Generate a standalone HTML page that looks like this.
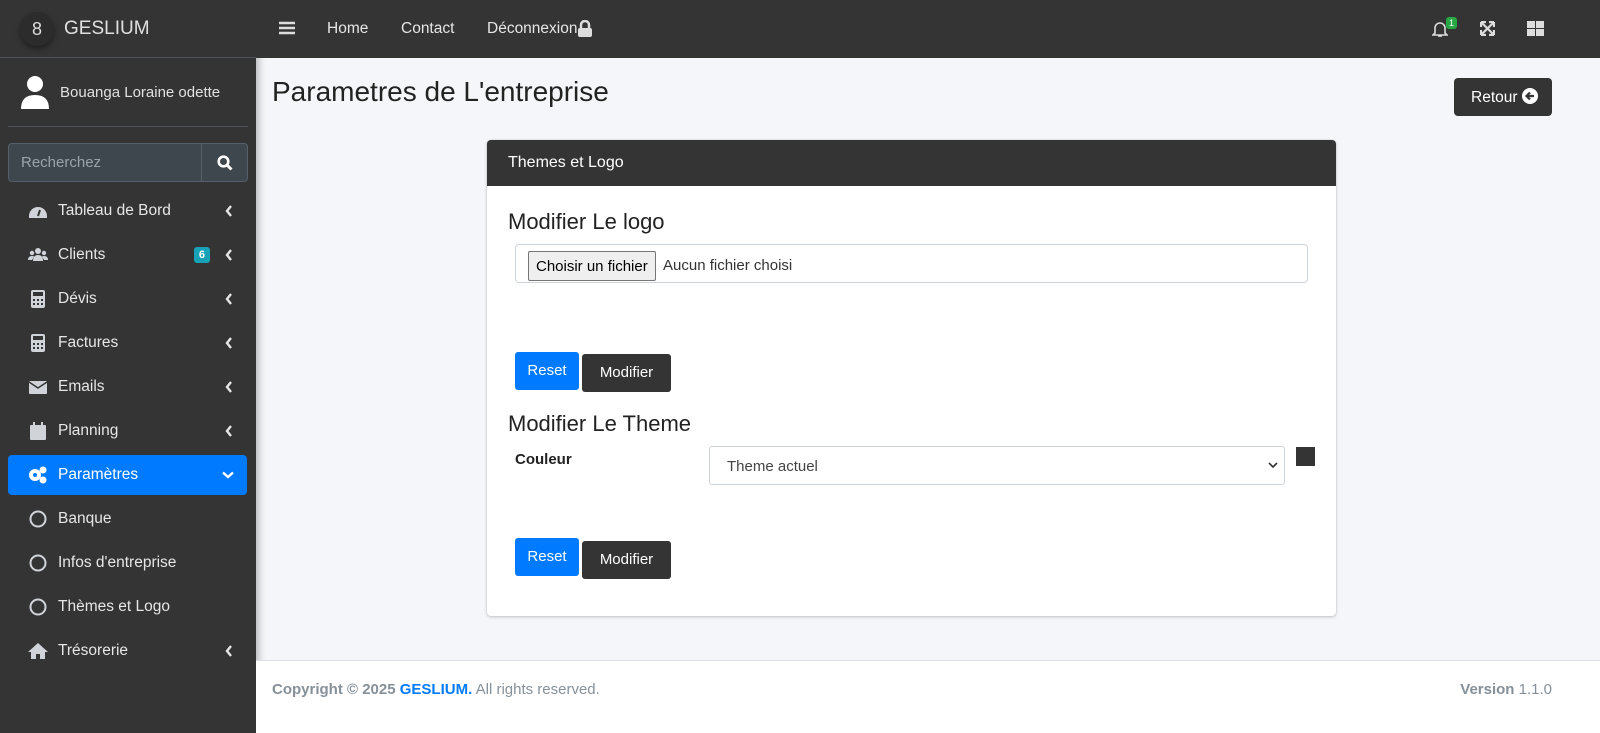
<!DOCTYPE html>
<html><head><meta charset="utf-8"><style>
*{box-sizing:border-box;margin:0;padding:0}
body{width:1600px;height:733px;overflow:hidden;font-family:"Liberation Sans",sans-serif;background:#f4f6f9;position:relative;font-size:15px}
.side{position:absolute;left:0;top:0;width:256px;height:733px;background:#343434;color:#c2c7d0;box-shadow:2px 0 8px rgba(0,0,0,.3)}
.brand{height:58px;border-bottom:1px solid #4b545c;display:flex;align-items:center;padding-left:20px}
.logo{width:34px;height:34px;border-radius:50%;background:#2c2c2c;box-shadow:0 3px 6px rgba(0,0,0,.4);color:#ddd;text-align:center;line-height:34px;font-size:18px}
.brand span{color:#e0e0e0;font-size:19px;margin-left:10px}
.user{height:69px;display:flex;align-items:center;border-bottom:1px solid #4b545c;margin:0 8px;padding-left:12px}
.user span{margin-left:10px;color:#e0e0e0;font-size:15px}
.search{margin:16px 8px 0 8px;height:39px;display:flex;border:1px solid #56606a;border-radius:4px;background:#3f474e}
.search div:first-child{flex:1;padding:10px 12px;color:#9aa3ab;font-size:15px}
.search div:last-child{width:46px;border-left:1px solid #56606a;display:flex;align-items:center;justify-content:center}
.item{position:absolute;left:8px;width:239px;height:40px;display:flex;align-items:center;padding-left:20px;color:#e6e6e6;font-size:15.5px}
.item svg{width:20px;height:20px;margin-right:10px}
.item svg.ch{position:absolute;right:14px;top:14px;width:8px;height:12px;margin:0}
.act{background:#007bff;color:#fff;border-radius:4px}
.top{position:absolute;left:256px;top:0;right:0;height:58px;background:#343434;color:#e6e6e6;font-size:15.5px}
.top span{position:absolute;top:20px}
h1{position:absolute;left:272px;top:76px;font-weight:normal;font-size:28px;color:#222}
.ret{position:absolute;left:1454px;top:78px;width:98px;height:38px;background:#343434;border-radius:4px;color:#fff;font-size:15.5px;padding:10px 0 0 17px}
.card{position:absolute;left:487px;top:140px;width:849px;height:476px;background:#fff;border-radius:4px;box-shadow:0 0 1px rgba(0,0,0,.2),0 1px 3px rgba(0,0,0,.2)}
.ch1{height:46px;background:#343434;color:#fff;border-radius:4px 4px 0 0;padding:14px 21px;font-size:16px}
.h4{position:absolute;font-size:22px;color:#222;left:21px}
.btn{position:absolute;height:38px;border-radius:3px;color:#fff;font-size:15px;text-align:center;line-height:38px}
.foot{position:absolute;left:256px;top:660px;right:0;height:73px;background:#fff;border-top:1px solid #dee2e6;color:#869099;font-size:15px;padding:20px 16px}
</style></head><body>
<div class="side">
 <div class="brand"><div class="logo">8</div><span>GESLIUM</span></div>
 <div class="user"><svg width="30" height="34" viewBox="0 0 30 34"><circle cx="15" cy="9" r="8" fill="#fff"/><path d="M1 34 Q1 20 15 20 Q29 20 29 34Z" fill="#fff"/></svg><span>Bouanga Loraine odette</span></div>
 <div class="search"><div>Recherchez</div><div><svg width="16" height="16" viewBox="0 0 16 16"><circle cx="6.5" cy="6.5" r="4.8" stroke="#fff" stroke-width="2.6" fill="none"/><path d="M10 10l4.5 4.5" stroke="#fff" stroke-width="3"/></svg></div></div>
</div>
<div class="item" style="top:191px"><svg viewBox="0 0 20 20"><path d="M1 15a9 9 0 0118 0v2H1z" fill="#d0d4d9"/><path d="M10 15l2-6" stroke="#343434" stroke-width="2"/></svg>Tableau de Bord<svg class="ch" viewBox="0 0 8 12"><path d="M6 1L2 6l4 5" stroke="#e6e6e6" stroke-width="2.4" fill="none"/></svg></div>
<div class="item" style="top:235px"><svg viewBox="0 0 20 20" fill="#d0d4d9"><circle cx="10" cy="6" r="3"/><circle cx="4" cy="8" r="2.2"/><circle cx="16" cy="8" r="2.2"/><path d="M5 16q0-6 5-6t5 6zM0 15q0-4 4-4 1.5 0 2 .5L4 15zM20 15q0-4-4-4-1.5 0-2 .5l2 3.5z"/></svg>Clients<span style="position:absolute;right:37px;top:12px;background:#17a2b8;color:#fff;font-size:11px;font-weight:bold;padding:2px 5px;border-radius:3px">6</span><svg class="ch" viewBox="0 0 8 12"><path d="M6 1L2 6l4 5" stroke="#e6e6e6" stroke-width="2.4" fill="none"/></svg></div>
<div class="item" style="top:279px"><svg viewBox="0 0 20 20"><rect x="3" y="1" width="14" height="18" rx="2" fill="#d0d4d9"/><rect x="5" y="3" width="10" height="4" fill="#343434"/><path d="M5 10h2v2H5zm4 0h2v2H9zm4 0h2v2h-2zM5 14h2v2H5zm4 0h2v2H9zm4 0h2v2h-2z" fill="#343434"/></svg>Dévis<svg class="ch" viewBox="0 0 8 12"><path d="M6 1L2 6l4 5" stroke="#e6e6e6" stroke-width="2.4" fill="none"/></svg></div>
<div class="item" style="top:323px"><svg viewBox="0 0 20 20"><rect x="3" y="1" width="14" height="18" rx="2" fill="#d0d4d9"/><rect x="5" y="3" width="10" height="4" fill="#343434"/><path d="M5 10h2v2H5zm4 0h2v2H9zm4 0h2v2h-2zM5 14h2v2H5zm4 0h2v2H9zm4 0h2v2h-2z" fill="#343434"/></svg>Factures<svg class="ch" viewBox="0 0 8 12"><path d="M6 1L2 6l4 5" stroke="#e6e6e6" stroke-width="2.4" fill="none"/></svg></div>
<div class="item" style="top:367px"><svg viewBox="0 0 20 20"><rect x="1" y="4" width="18" height="13" rx="1" fill="#d0d4d9"/><path d="M1 5l9 6 9-6" stroke="#343434" stroke-width="1.5" fill="none"/></svg>Emails<svg class="ch" viewBox="0 0 8 12"><path d="M6 1L2 6l4 5" stroke="#e6e6e6" stroke-width="2.4" fill="none"/></svg></div>
<div class="item" style="top:411px"><svg viewBox="0 0 20 20" fill="#d0d4d9"><rect x="2" y="4" width="16" height="15" rx="1"/><rect x="5" y="1" width="2" height="4"/><rect x="13" y="1" width="2" height="4"/></svg>Planning<svg class="ch" viewBox="0 0 8 12"><path d="M6 1L2 6l4 5" stroke="#e6e6e6" stroke-width="2.4" fill="none"/></svg></div>
<div class="item act" style="top:455px"><svg viewBox="0 0 20 20" fill="#fff"><circle cx="7" cy="10" r="6"/><circle cx="15" cy="5" r="3.5"/><circle cx="15" cy="15" r="3.5"/><circle cx="7" cy="10" r="2" fill="#007bff"/></svg>Paramètres<svg style="position:absolute;right:13px;top:16px;width:12px;height:8px;margin:0" viewBox="0 0 12 8"><path d="M1 1.5l5 4.5 5-4.5" stroke="#fff" stroke-width="2.4" fill="none"/></svg></div>
<div class="item" style="top:499px"><svg viewBox="0 0 20 20"><circle cx="10" cy="10" r="7.5" stroke="#d0d4d9" stroke-width="2" fill="none"/></svg>Banque</div>
<div class="item" style="top:543px"><svg viewBox="0 0 20 20"><circle cx="10" cy="10" r="7.5" stroke="#d0d4d9" stroke-width="2" fill="none"/></svg>Infos d'entreprise</div>
<div class="item" style="top:587px"><svg viewBox="0 0 20 20"><circle cx="10" cy="10" r="7.5" stroke="#d0d4d9" stroke-width="2" fill="none"/></svg>Thèmes et Logo</div>
<div class="item" style="top:631px"><svg viewBox="0 0 20 20" fill="#d0d4d9"><path d="M10 2L0 11h3v7h5v-5h4v5h5v-7h3z"/></svg>Trésorerie<svg class="ch" viewBox="0 0 8 12"><path d="M6 1L2 6l4 5" stroke="#e6e6e6" stroke-width="2.4" fill="none"/></svg></div>

<div class="top">
 <svg style="position:absolute;left:23px;top:21px" width="16" height="14"><path d="M0 2h16M0 7h16M0 12h16" stroke="#ddd" stroke-width="2.5"/></svg>
 <span style="left:71px">Home</span><span style="left:145px">Contact</span><span style="left:231px">Déconnexion</span>
 <svg style="position:absolute;left:321px;top:20px" width="16" height="17"><path d="M4 8V5a4 4 0 018 0v3" stroke="#ddd" stroke-width="2.5" fill="none"/><rect x="1" y="8" width="14" height="9" rx="2" fill="#ddd"/></svg>
 <svg style="position:absolute;left:1176px;top:20px" width="16" height="18"><path d="M3 13V8a5 5 0 0110 0v5l2 2H1z" stroke="#ddd" stroke-width="1.6" fill="none"/><path d="M6 16h4" stroke="#ddd" stroke-width="1.6"/></svg>
 <div style="position:absolute;left:1190px;top:17px;background:#28a745;color:#fff;font-size:9px;padding:1px 3px;border-radius:3px">1</div>
 <svg style="position:absolute;left:1224px;top:21px" width="15" height="15"><path d="M1 1l13 13M14 1L1 14M1 1h5M1 1v5M14 1h-5M14 1v5M1 14h5M1 14v-5M14 14h-5M14 14v-5" stroke="#ddd" stroke-width="2.2"/></svg>
 <svg style="position:absolute;left:1271px;top:21px" width="17" height="15" fill="#ddd"><rect x="0" y="0" width="8" height="7"/><rect x="9" y="0" width="8" height="7"/><rect x="0" y="8" width="8" height="7"/><rect x="9" y="8" width="8" height="7"/></svg>
</div>

<h1>Parametres de L'entreprise</h1>
<div class="ret">Retour <svg width="16" height="16" style="vertical-align:-2px"><circle cx="8" cy="8" r="8" fill="#fff"/><path d="M12 8H5M8 4.5L4.5 8 8 11.5" stroke="#343434" stroke-width="2.2" fill="none"/></svg></div>

<div class="card">
 <div class="ch1">Themes et Logo</div>
 <div class="h4" style="top:69px">Modifier Le logo</div>
 <div style="position:absolute;left:28px;top:104px;width:793px;height:39px;border:1px solid #ced4da;border-radius:4px;font-size:15px;color:#333">
  <div style="position:absolute;left:12px;top:6px;height:30px;border:1px solid #767676;background:#efefef;border-radius:2px;padding:6px 7px;font-size:15px;color:#000">Choisir un fichier</div>
  <span style="position:absolute;left:147px;top:12px">Aucun fichier choisi</span></div>
 <div class="btn" style="left:28px;top:212px;width:64px;background:#007bff">Reset</div>
 <div class="btn" style="left:95px;top:214px;width:89px;background:#343434">Modifier</div>
 <div class="h4" style="top:271px">Modifier Le Theme</div>
 <b style="position:absolute;left:28px;top:311px;font-size:15px;color:#222">Couleur</b>
 <div style="position:absolute;left:222px;top:306px;width:576px;height:39px;border:1px solid #ced4da;border-radius:3px;padding:11px 17px;color:#444;font-size:15px">Theme actuel<svg style="position:absolute;right:6px;top:15px" width="10" height="7" viewBox="0 0 10 7"><path d="M1 1l4 4 4-4" stroke="#333" stroke-width="1.6" fill="none"/></svg></div>
 <div style="position:absolute;left:809px;top:307px;width:19px;height:19px;background:#343434"></div>
 <div class="btn" style="left:28px;top:398px;width:64px;background:#007bff">Reset</div>
 <div class="btn" style="left:95px;top:401px;width:89px;background:#343434">Modifier</div>
</div>

<div class="foot"><b>Copyright © 2025 <span style="color:#007bff">GESLIUM.</span></b> All rights reserved.<span style="position:absolute;right:48px"><b>Version</b> 1.1.0</span></div>
</body></html>
